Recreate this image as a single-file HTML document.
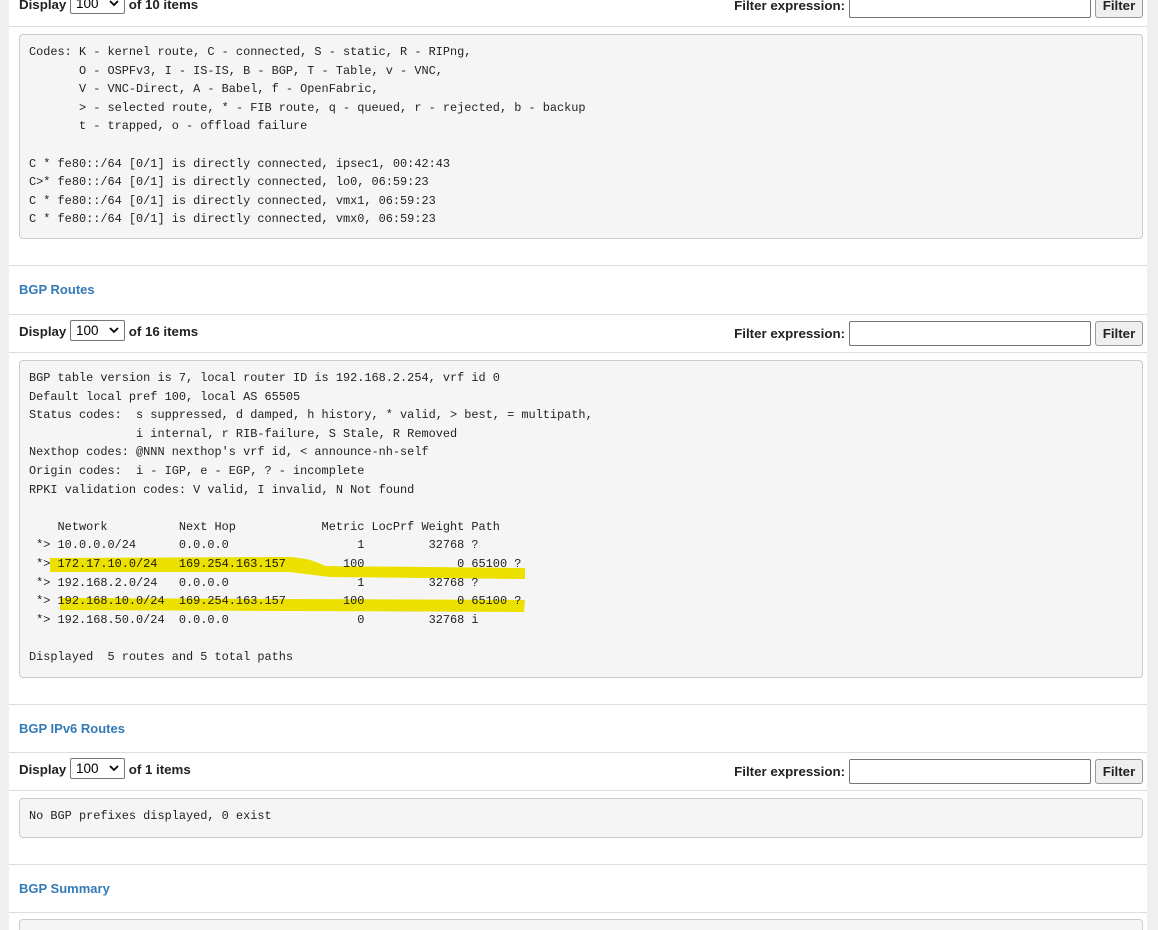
<!DOCTYPE html>
<html><head><meta charset="utf-8"><style>
*{box-sizing:border-box;margin:0;padding:0}
html{width:1158px;height:930px;overflow:hidden}
body{width:1158px;height:930px;overflow:hidden;background:#f0f0f0;font-family:"Liberation Sans",sans-serif;position:relative}
.panel{position:absolute;left:9px;top:0;width:1138px;height:930px;background:#fff}
.hl{position:absolute;left:9px;width:1138px;height:1px;background:#ddd}
.tb{position:absolute;left:19px;font-weight:bold;font-size:13.3px;color:#222;height:24px;line-height:24px;white-space:nowrap}
.sel{display:inline-block;vertical-align:middle;width:55px;height:21px;border:1px solid #767676;border-radius:2px;margin:-3px 0 0 0;font-weight:normal;font-size:13.5px;padding-left:5px;line-height:19px;position:relative;color:#000}
.sel svg{position:absolute;right:5px;top:6px}
.flt{position:absolute;right:15px;display:flex;align-items:center;font-weight:bold;font-size:13.3px;color:#222}
.inp{width:242px;height:25px;border:1px solid #767676;border-radius:2px;margin-left:4px;background:#fff}
.btn{width:48px;height:25px;border:1px solid #999;border-radius:3px;background:#efefef;margin-left:4px;text-align:center;line-height:23px}
.pre{position:absolute;left:19px;width:1124px;background:#f5f5f5;border:1px solid #ccc;border-radius:4px;padding:8px 9px 8px;font-family:"Liberation Mono",monospace;font-size:11.9px;line-height:18.6px;color:#222;white-space:pre;overflow:hidden}
.h{position:absolute;left:19px;font-weight:bold;font-size:13px;color:#337ab7}
</style></head><body>
<div class="panel"></div>
<div class="tb" style="top:-7px">Display <span class="sel">100<svg width="10" height="7"><path d="M1 1l4 4 4-4" stroke="#000" stroke-width="1.8" fill="none"/></svg></span> of 10 items</div>
<div class="flt" style="top:-7px">Filter expression:<div class="inp"></div><div class="btn">Filter</div></div>
<div class="hl" style="top:26px"></div>
<div class="pre" style="top:34px;height:205px">Codes: K - kernel route, C - connected, S - static, R - RIPng,
       O - OSPFv3, I - IS-IS, B - BGP, T - Table, v - VNC,
       V - VNC-Direct, A - Babel, f - OpenFabric,
       &gt; - selected route, * - FIB route, q - queued, r - rejected, b - backup
       t - trapped, o - offload failure

C * fe80::/64 [0/1] is directly connected, ipsec1, 00:42:43
C&gt;* fe80::/64 [0/1] is directly connected, lo0, 06:59:23
C * fe80::/64 [0/1] is directly connected, vmx1, 06:59:23
C * fe80::/64 [0/1] is directly connected, vmx0, 06:59:23</div>
<div class="hl" style="top:265px"></div>
<div class="h" style="top:282px">BGP Routes</div>
<div class="hl" style="top:314px"></div>
<div class="tb" style="top:320px">Display <span class="sel">100<svg width="10" height="7"><path d="M1 1l4 4 4-4" stroke="#000" stroke-width="1.8" fill="none"/></svg></span> of 16 items</div>
<div class="flt" style="top:321px">Filter expression:<div class="inp"></div><div class="btn">Filter</div></div>
<div class="hl" style="top:352px"></div>
<div class="pre" style="top:360px;height:318px">BGP table version is 7, local router ID is 192.168.2.254, vrf id 0
Default local pref 100, local AS 65505
Status codes:  s suppressed, d damped, h history, * valid, &gt; best, = multipath,
               i internal, r RIB-failure, S Stale, R Removed
Nexthop codes: @NNN nexthop's vrf id, &lt; announce-nh-self
Origin codes:  i - IGP, e - EGP, ? - incomplete
RPKI validation codes: V valid, I invalid, N Not found

    Network          Next Hop            Metric LocPrf Weight Path
 *&gt; 10.0.0.0/24      0.0.0.0                  1         32768 ?
 *&gt; 172.17.10.0/24   169.254.163.157        100             0 65100 ?
 *&gt; 192.168.2.0/24   0.0.0.0                  1         32768 ?
 *&gt; 192.168.10.0/24  169.254.163.157        100             0 65100 ?
 *&gt; 192.168.50.0/24  0.0.0.0                  0         32768 i

Displayed  5 routes and 5 total paths</div>
<svg style="position:absolute;left:0;top:0;mix-blend-mode:multiply" width="1158" height="930">
<path d="M50 558 L290 557 Q310 558 325 566 L525 568 L525 579 L330 577 Q305 574 290 572 L50 572 Z" fill="#f5ea00"/>
<path d="M60 598 L525 600 L524 612 L60 610 Z" fill="#f5ea00"/>
</svg>
<div class="hl" style="top:704px"></div>
<div class="h" style="top:721px">BGP IPv6 Routes</div>
<div class="hl" style="top:752px"></div>
<div class="tb" style="top:758px">Display <span class="sel">100<svg width="10" height="7"><path d="M1 1l4 4 4-4" stroke="#000" stroke-width="1.8" fill="none"/></svg></span> of 1 items</div>
<div class="flt" style="top:759px">Filter expression:<div class="inp"></div><div class="btn">Filter</div></div>
<div class="hl" style="top:790px"></div>
<div class="pre" style="top:798px;height:40px">No BGP prefixes displayed, 0 exist</div>
<div class="hl" style="top:864px"></div>
<div class="h" style="top:881px">BGP Summary</div>
<div class="hl" style="top:912px"></div>
<div class="pre" style="top:919px;height:11px;border-bottom:none;border-radius:4px 4px 0 0"></div>
</body></html>
